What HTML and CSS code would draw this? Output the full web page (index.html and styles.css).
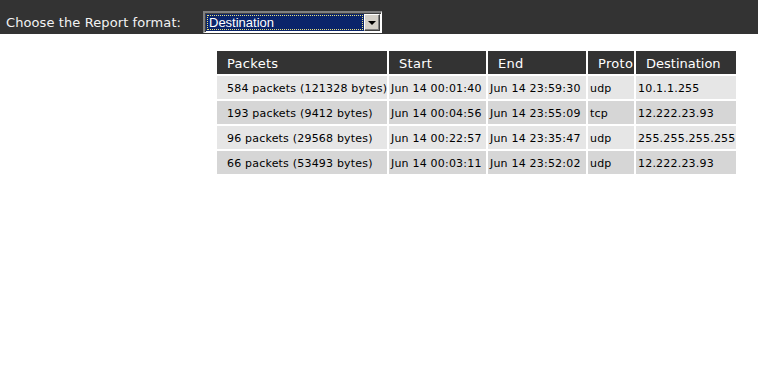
FILE: index.html
```html
<!DOCTYPE html>
<html>
<head>
<meta charset="utf-8">
<link rel="stylesheet" href="styles.css">
</head>
<body>
<div class="topbar">
  <span class="label">Choose the Report format:</span>
  <div class="select">
    <div class="select-value"><span class="focus">Destination</span></div>
    <div class="select-btn"><span class="arrow"></span></div>
  </div>
</div>
<table class="report">
  <colgroup>
    <col class="c-packets"><col class="c-start"><col class="c-end"><col class="c-proto"><col class="c-dest">
  </colgroup>
  <thead>
    <tr><th>Packets</th><th>Start</th><th>End</th><th>Proto</th><th>Destination</th></tr>
  </thead>
  <tbody>
    <tr class="odd"><td class="pk">584 packets (121328 bytes)</td><td>Jun 14 00:01:40</td><td>Jun 14 23:59:30</td><td>udp</td><td>10.1.1.255</td></tr>
    <tr class="even"><td class="pk">193 packets (9412 bytes)</td><td>Jun 14 00:04:56</td><td>Jun 14 23:55:09</td><td>tcp</td><td>12.222.23.93</td></tr>
    <tr class="odd"><td class="pk">96 packets (29568 bytes)</td><td>Jun 14 00:22:57</td><td>Jun 14 23:35:47</td><td>udp</td><td>255.255.255.255</td></tr>
    <tr class="even"><td class="pk">66 packets (53493 bytes)</td><td>Jun 14 00:03:11</td><td>Jun 14 23:52:02</td><td>udp</td><td>12.222.23.93</td></tr>
  </tbody>
</table>
</body>
</html>
```
FILE: styles.css
```css
html, body {
  margin: 0;
  padding: 0;
  background: #fff;
  font-family: "DejaVu Sans", Verdana, sans-serif;
}
.topbar {
  background: #333333;
  height: 34px;
  box-sizing: border-box;
  padding: 11px 0 1px 6px;
  display: flex;
  align-items: center;
}
.label {
  width: 197px;
  flex: none;
  color: #f2f2f2;
  font-size: 13px;
  line-height: 16px;
  letter-spacing: 0.1px;
  padding-top: 1px;
}
.select {
  width: 179px;
  height: 22px;
  box-sizing: border-box;
  display: flex;
  background: #fff;
  border-top: 2px solid #808080;
  border-left: 2px solid #808080;
  border-right: 1px solid #ffffff;
  border-bottom: 1px solid #ffffff;
  box-shadow: inset 1px 1px 0 #404040;
  padding: 1px 1px 1px 1px;
}
.select-value {
  flex: 1;
  background: #0a246a;
  padding: 1px;
  display: flex;
}
.focus {
  flex: 1;
  border: 1px dotted #e8e07a;
  color: #fff;
  font-family: "Liberation Sans", Arial, sans-serif;
  font-size: 13px;
  line-height: 14px;
  padding-left: 1px;
}
.select-btn {
  width: 16px;
  flex: none;
  background: #d4d0c8;
  box-sizing: border-box;
  border-top: 1px solid #ffffff;
  border-left: 1px solid #ffffff;
  border-right: 1px solid #404040;
  border-bottom: 1px solid #404040;
  box-shadow: inset -1px -1px 0 #808080;
  display: flex;
  align-items: center;
  justify-content: center;
}
.arrow {
  width: 0;
  height: 0;
  border-left: 4px solid transparent;
  border-right: 4px solid transparent;
  border-top: 4px solid #000;
  margin-top: 1px;
}
.report {
  margin: 15px 0 0 215px;
  border-collapse: separate;
  border-spacing: 2px;
  table-layout: fixed;
  width: 523px;
}
.c-packets { width: 170px; }
.c-start { width: 97px; }
.c-end { width: 98px; }
.c-proto { width: 46px; }
.c-dest { width: 100px; }
.report th {
  background: #333333;
  color: #fff;
  font-weight: normal;
  font-size: 13px;
  letter-spacing: 0.3px;
  text-align: left;
  height: 23px;
  padding: 1px 0 0 10px;
  white-space: nowrap;
  overflow: visible;
  box-sizing: border-box;
}
.report th:last-child { letter-spacing: 0; }
.report td {
  font-size: 11px;
  letter-spacing: 0.2px;
  color: #000;
  height: 23px;
  padding: 1px 0 0 2px;
  white-space: nowrap;
  box-sizing: border-box;
  vertical-align: middle;
}
.report td.pk { padding-left: 10px; }
.odd td { background: #e6e6e6; }
.even td { background: #d6d6d6; }
```
